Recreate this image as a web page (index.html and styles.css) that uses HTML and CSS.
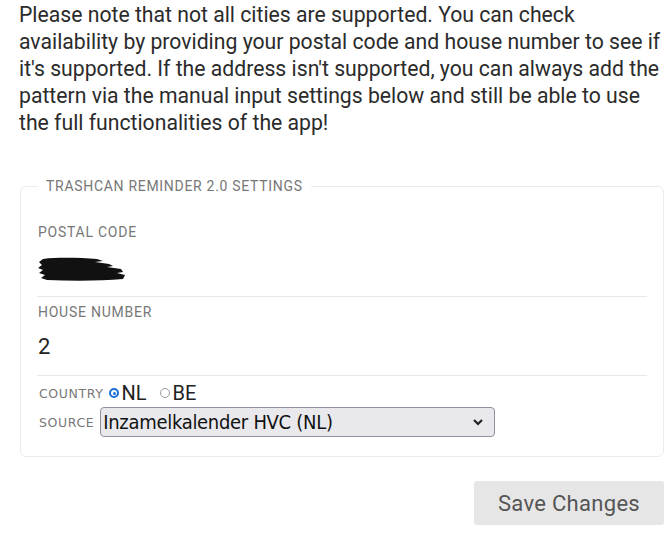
FILE: index.html
```html
<!DOCTYPE html>
<html>
<head>
<meta charset="utf-8">
<link rel="stylesheet" href="styles.css">
</head>
<body>
<div class="page">
  <p class="note">Please note that not all cities are supported. You can check<br>availability by providing your postal code and house number to see if<br>it's supported. If the address isn't supported, you can always add the<br>pattern via the manual input settings below and still be able to use<br>the full functionalities of the app!</p>
  <fieldset class="settings">
    <legend class="legend">Trashcan Reminder 2.0 Settings</legend>
    <div class="field first">
      <div class="label">Postal Code</div>
      <div class="value"><svg class="scribble" width="90" height="26" viewBox="0 0 90 26"><path d="M6 3 C22 1 44 2 60 3 L66 5 L58 6 L72 8 L76 10 L70 11 L84 13 L86 16 L80 17 L88 19 L86 23 C64 25 36 25 10 24 L4 22 L8 19 L2 17 L6 14 L1 12 L5 9 L2 6 Z" fill="#111"/></svg></div>
    </div>
    <div class="field">
      <div class="label">House Number</div>
      <div class="value num">2</div>
    </div>
    <div class="row country">
      <span class="small">Country</span>
      <span class="radio on"></span><span class="opt">NL</span>
      <span class="radio"></span><span class="opt">BE</span>
    </div>
    <div class="row source">
      <span class="small">Source</span>
      <div class="select"><span>Inzamelkalender HVC (NL)</span><svg width="12" height="8" viewBox="0 0 12 8"><path d="M2 2 L6 6 L10 2" fill="none" stroke="#222" stroke-width="2.2"/></svg></div>
    </div>
  </fieldset>
  <div class="actions"><button class="save">Save Changes</button></div>
</div>
</body>
</html>
```
FILE: styles.css
```css
html, body { margin: 0; padding: 0; background: #fff; }
body { font-family: Roboto, "Noto Sans", sans-serif; color: #333; }
.page { padding: 0 0 0 19px; width: 645px; }
.note { margin: 0; padding-top: 1px; font-size: 21.2px; line-height: 27px; color: #2b2b2b; white-space: nowrap; }
.settings {
  margin: 41px 0 0 1px;
  border: 1px solid #ebebeb;
  border-radius: 6px;
  padding: 0 16px 19px 16px;
}
.legend {
  margin-left: 1px;
  padding: 0 8px;
  font-size: 14px;
  line-height: 18px;
  text-transform: uppercase;
  color: #777;
  letter-spacing: 0.7px;
}
.field { border-bottom: 1px solid #e8e8e8; padding-top: 6px; }
.field.first { padding-top: 28px; }
.label { font-size: 14px; line-height: 18px; text-transform: uppercase; color: #777; letter-spacing: 0.75px; padding-left: 1px; }
.value { height: 55px; display: flex; align-items: center; }
.num { font-size: 22px; color: #222; height: 54px; padding-left: 1px; padding-bottom: 4px; box-sizing: border-box; }
.row { display: flex; align-items: center; }
.country { margin-top: 5px; height: 24px; }
.small { font-family: "DejaVu Sans", Verdana, sans-serif; font-size: 12.5px; text-transform: uppercase; color: #777; margin-left: 2px; margin-right: 6px; letter-spacing: 0.6px; }
.radio { width: 8px; height: 8px; border-radius: 50%; border: 1.6px solid #9a9a9a; margin-right: 2px; box-sizing: content-box; }
.radio.on { border: 2.6px solid #1a6fd8; width: 6px; height: 6px; position: relative; }
.radio.on::after { content: ""; position: absolute; left: 1.5px; top: 1.5px; width: 3px; height: 3px; border-radius: 50%; background: #1a6fd8; }
.opt { font-size: 20px; line-height: 24px; color: #222; margin-right: 14px; }
.source { margin-top: 2px; }
.source .small { margin-right: 6px; }
.select {
  width: 395px; height: 30px;
  background: #e9e9ed;
  border: 1px solid #8f8f9d;
  border-radius: 4px;
  display: flex; align-items: center; justify-content: space-between;
  padding: 0 10px 0 2px;
  box-sizing: border-box;
  font-family: "DejaVu Sans Condensed", "DejaVu Sans", Verdana, sans-serif;
  font-stretch: condensed;
  font-size: 20px; color: #111;
}
.select span { letter-spacing: -0.3px; }
.actions { display: flex; justify-content: flex-end; margin-top: 24px; }
.save {
  font-family: Roboto, sans-serif;
  font-size: 22px; color: #555;
  background: #e6e6e6; border: none; border-radius: 3px;
  width: 190px; height: 44px;
  letter-spacing: 0.3px;
}
```
